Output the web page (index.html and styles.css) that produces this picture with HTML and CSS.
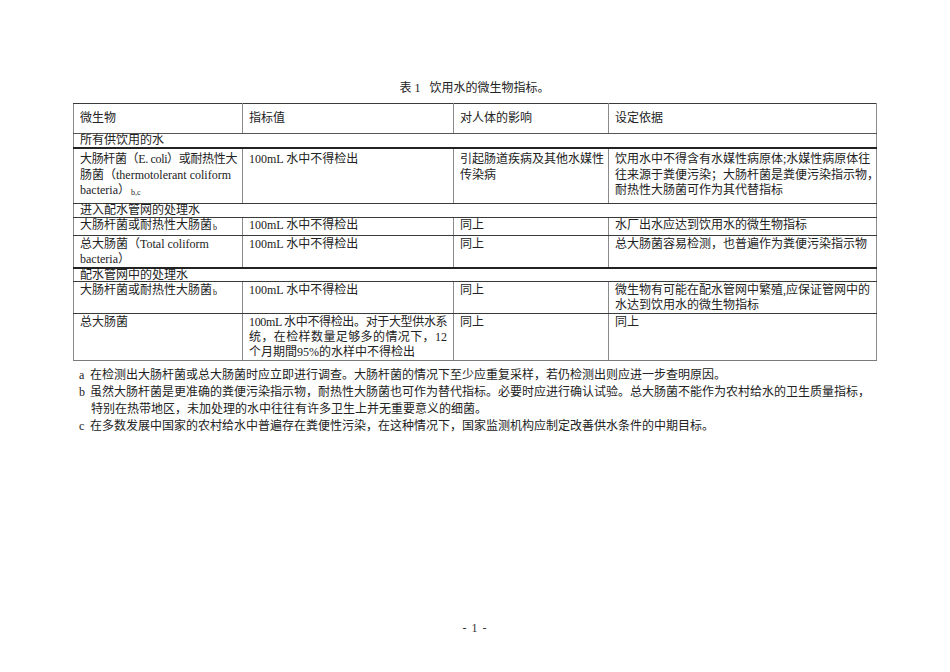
FILE: index.html
```html
<!DOCTYPE html>
<html lang="zh-CN">
<head>
<meta charset="utf-8">
<title>表1 饮用水的微生物指标</title>
<link rel="stylesheet" href="styles.css">
</head>
<body>
<div class="page">
  <div class="content">
    <p class="caption">表 1&nbsp;&nbsp;&nbsp;饮用水的微生物指标。</p>
    <table class="grid">
      <colgroup>
        <col class="c1"><col class="c2"><col class="c3"><col class="c4">
      </colgroup>
      <tr class="head">
        <td>微生物</td><td>指标值</td><td>对人体的影响</td><td>设定依据</td>
      </tr>
      <tr class="sec sec-a">
        <td colspan="4">所有供饮用的水</td>
      </tr>
      <tr class="row r1">
        <td><span class="ln tight">大肠杆菌（E. coli）或耐热性大</span><span class="ln">肠菌（thermotolerant coliform</span><span class="ln">bacteria）<span class="mk">b,c</span></span></td>
        <td>100mL 水中不得检出</td>
        <td><span class="ln just">引起肠道疾病及其他水媒性</span><span class="ln">传染病</span></td>
        <td><span class="ln just">饮用水中不得含有水媒性病原体;水媒性病原体往</span><span class="ln just">往来源于粪便污染；大肠杆菌是粪便污染指示物，</span><span class="ln">耐热性大肠菌可作为其代替指标</span></td>
      </tr>
      <tr class="sec sec-b">
        <td colspan="4">进入配水管网的处理水</td>
      </tr>
      <tr class="row r2">
        <td>大肠杆菌或耐热性大肠菌<span class="mk">b</span></td>
        <td>100mL 水中不得检出</td>
        <td>同上</td>
        <td>水厂出水应达到饮用水的微生物指标</td>
      </tr>
      <tr class="row r3">
        <td><span class="ln">总大肠菌（Total coliform</span><span class="ln">bacteria）</span></td>
        <td>100mL 水中不得检出</td>
        <td>同上</td>
        <td>总大肠菌容易检测，也普遍作为粪便污染指示物</td>
      </tr>
      <tr class="sec sec-c">
        <td colspan="4">配水管网中的处理水</td>
      </tr>
      <tr class="row r4">
        <td>大肠杆菌或耐热性大肠菌<span class="mk">b</span></td>
        <td>100mL 水中不得检出</td>
        <td>同上</td>
        <td><span class="ln just">微生物有可能在配水管网中繁殖,应保证管网中的</span><span class="ln">水达到饮用水的微生物指标</span></td>
      </tr>
      <tr class="row r5">
        <td>总大肠菌</td>
        <td><span class="ln just tight">100mL 水中不得检出。对于大型供水系</span><span class="ln just">统，在检样数量足够多的情况下，12</span><span class="ln">个月期間95%的水样中不得检出</span></td>
        <td>同上</td>
        <td>同上</td>
      </tr>
    </table>
    <div class="notes">
      <p class="note"><span class="key">a</span> 在检测出大肠杆菌或总大肠菌时应立即进行调查。大肠杆菌的情况下至少应重复采样，若仍检测出则应进一步查明原因。</p>
      <p class="note"><span class="key">b</span> 虽然大肠杆菌是更准确的粪便污染指示物，耐热性大肠菌也可作为替代指标。必要时应进行确认试验。总大肠菌不能作为农村给水的卫生质量指标，<br><span class="cont">特别在热带地区，未加处理的水中往往有许多卫生上并无重要意义的细菌。</span></p>
      <p class="note"><span class="key">c</span> 在多数发展中国家的农村给水中普遍存在粪便性污染，在这种情况下，国家监测机构应制定改善供水条件的中期目标。</p>
    </div>
  </div>
  <div class="pageno">- 1 -</div>
</div>
</body>
</html>
```

FILE: styles.css
```css
html, body {
  margin: 0;
  padding: 0;
  background: #ffffff;
}

body {
  font-family: "Liberation Serif", "Noto Sans CJK SC", serif;
  font-size: 12px;
  color: #1a1a1a;
}

.page {
  width: 950px;
  height: 672px;
  display: flex;
  flex-direction: column;
  box-sizing: border-box;
  padding: 80px 0 36px 73px;
}

.content {
  width: 803px;
}

.caption {
  margin: 0 0 7px 0;
  line-height: 16px;
  text-align: center;
  color: #222;
}

.grid {
  width: 803px;
  table-layout: fixed;
  border-collapse: collapse;
  border: 1px solid #7a7a7a;
}

.c1 { width: 169px; }
.c2 { width: 211px; }
.c3 { width: 155px; }
.c4 { width: 268px; }

.grid td {
  border-left: 1.5px solid #8a8a8a;
  border-right: 1.5px solid #8a8a8a;
  border-top: 1px solid #3a3a3a;
  border-bottom: 1px solid #3a3a3a;
  padding: 0 6px;
  vertical-align: top;
  line-height: 15px;
  white-space: nowrap;
  overflow: visible;
  color: #222;
}

.head td {
  height: 29px;
  vertical-align: middle;
  border-bottom-color: #555;
}

.sec td {
  line-height: 13px;
  vertical-align: middle;
}

.sec-a td { border-bottom: 2px solid #222; }
.sec-c td { border-top: 2px solid #222; line-height: 12px; }

.r1 td { padding-top: 3px; padding-bottom: 2px; line-height: 15.5px; }
.r2 td { padding-top: 0; }
.r3 td { padding-top: 1px; }
.r4 td { padding-top: 1px; }
.r5 td { padding-top: 1px; border-bottom-color: #7a7a7a; }

.ln {
  display: block;
}

.just {
  text-align: justify;
  text-align-last: justify;
}

.tight {
  letter-spacing: -0.35px;
}

.mk {
  font-size: 8px;
  vertical-align: -1px;
  margin-left: 1px;
}

.notes {
  margin-top: 6px;
  margin-left: 6px;
}

.note {
  margin: 0;
  line-height: 17px;
  white-space: nowrap;
  color: #222;
}

.key {
  display: inline-block;
  width: 8px;
}

.cont {
  display: inline-block;
  padding-left: 12px;
}

.pageno {
  margin-top: auto;
  width: 803px;
  text-align: center;
  line-height: 16px;
  color: #333;
  word-spacing: 2px;
}
```
